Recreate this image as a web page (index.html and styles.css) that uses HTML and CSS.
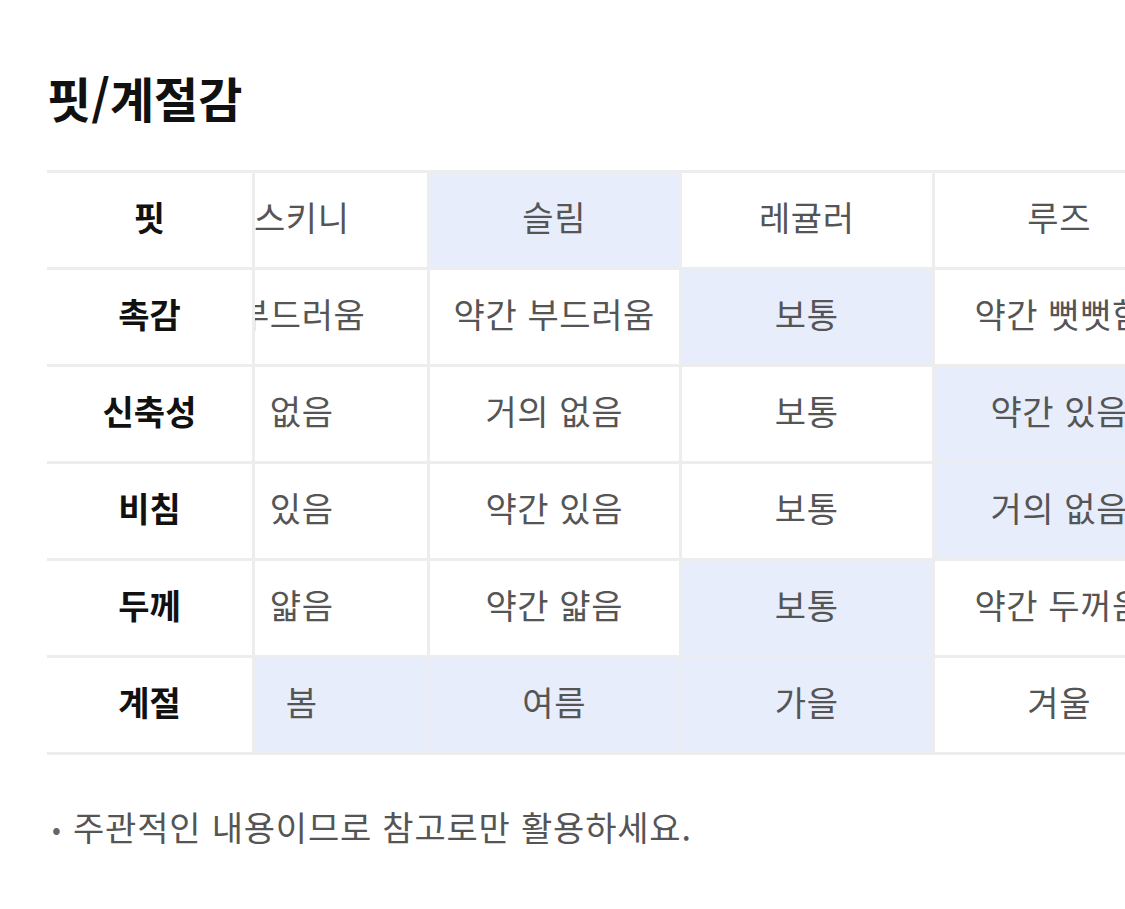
FILE: index.html
```html
<!DOCTYPE html>
<html lang="ko">
<head>
<meta charset="utf-8">
<title>핏/계절감</title>
<link rel="stylesheet" href="styles.css">
</head>
<body>
<section class="page">
  <h2 class="title">핏/계절감</h2>
  <div class="table">
    <div class="heads">
      <div class="hcell">핏</div>
      <div class="hcell">촉감</div>
      <div class="hcell">신축성</div>
      <div class="hcell">비침</div>
      <div class="hcell">두께</div>
      <div class="hcell">계절</div>
    </div>
    <div class="scroll">
      <div class="grid">
        <div class="cell">스키니</div><div class="cell on">슬림</div><div class="cell">레귤러</div><div class="cell">루즈</div>
        <div class="cell">부드러움</div><div class="cell">약간 부드러움</div><div class="cell on">보통</div><div class="cell">약간 뻣뻣함</div>
        <div class="cell">없음</div><div class="cell">거의 없음</div><div class="cell">보통</div><div class="cell on">약간 있음</div>
        <div class="cell">있음</div><div class="cell">약간 있음</div><div class="cell">보통</div><div class="cell on">거의 없음</div>
        <div class="cell">얇음</div><div class="cell">약간 얇음</div><div class="cell on">보통</div><div class="cell">약간 두꺼움</div>
        <div class="cell on">봄</div><div class="cell on">여름</div><div class="cell on">가을</div><div class="cell">겨울</div>
      </div>
    </div>
  </div>
  <p class="note"><span class="dot">•</span>주관적인 내용이므로 참고로만 활용하세요.</p>
</section>
</body>
</html>
```

FILE: styles.css
```css
html, body {
  margin: 0;
  padding: 0;
  background: #ffffff;
  overflow: hidden;
}
body {
  font-family: "Noto Sans CJK KR", "Noto Sans", sans-serif;
  color: #111;
}
.page {
  padding: 64px 0 0 47px;
}
.title {
  margin: 0;
  font-size: 48px;
  font-weight: 700;
  line-height: 66px;
  color: #111;
}
.table {
  display: flex;
  margin-top: 40px;
  border-top: 3px solid #ededed;
}
.heads {
  flex: none;
  width: 205px;
  border-right: 3px solid #ededed;
}
.hcell {
  box-sizing: border-box;
  height: 97px;
  padding-bottom: 8px;
  border-bottom: 3px solid #ededed;
  display: flex;
  align-items: center;
  justify-content: center;
  font-size: 34px;
  font-weight: 700;
  color: #111;
}
.scroll {
  flex: 1;
  overflow: hidden;
}
.grid {
  display: grid;
  grid-template-columns: repeat(4, 252.5px);
  margin-left: -78px;
  width: max-content;
}
.cell {
  box-sizing: border-box;
  height: 97px;
  padding-bottom: 8px;
  border-right: 3px solid #ededed;
  border-bottom: 3px solid #ededed;
  display: flex;
  align-items: center;
  justify-content: center;
  font-size: 34px;
  letter-spacing: 0.6px;
  color: #555;
  white-space: nowrap;
  overflow: hidden;
}
.cell.on {
  background: #e7edfb;
}
.note {
  margin: 48px 0 0 5px;
  font-size: 34px;
  line-height: 48px;
  color: #555;
  letter-spacing: 0.8px;
}
.dot {
  display: inline-block;
  width: 21px;
  color: #666;
  font-size: 26px;
  vertical-align: 2px;
}
```
